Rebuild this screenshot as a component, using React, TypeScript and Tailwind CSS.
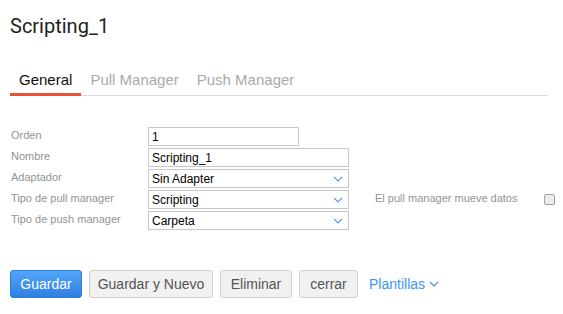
import React from "react";

const Chevron = ({ className = "" }: { className?: string }) => (
  <svg width="10" height="6" viewBox="0 0 10 6" className={className}>
    <path d="M1 1 L5 5 L9 1" fill="none" stroke="currentColor" strokeWidth="1.2" />
  </svg>
);

const Row = ({ label, children }: { label: string; children: React.ReactNode }) => (
  <div className="flex items-center h-[21px]">
    <div className="w-[148px] pl-[11px] mb-[3px] text-[11px] text-[#939393]">{label}</div>
    {children}
  </div>
);

const Select = ({ value }: { value: string }) => (
  <div className="w-[201px] h-[19px] border border-[#c8c8c8] bg-white flex items-center justify-between pl-[3px] pr-[5px] text-[12px] text-black">
    <span>{value}</span>
    <Chevron className="text-[#5b9bf0]" />
  </div>
);

export default function App() {
  return (
    <div className="w-[563px] h-[314px] bg-white relative" style={{ fontFamily: '"Liberation Sans", Arial, sans-serif' }}>
      <div className="pl-[10px] pt-[13px] text-[20px] text-[#222] leading-[26px]" style={{ fontFamily: 'Roboto, sans-serif' }}>
        Scripting_1
      </div>
      <div className="mt-[31px] ml-[10px] mr-[15px] flex border-b border-[#dcdcdc] text-[15px]">
        <div className="px-[9px] pb-[3px] leading-[20px] text-[#111] border-b-[3px] border-[#e8523a] mb-[-1px]">General</div>
        <div className="px-[9px] pb-[3px] leading-[20px] text-[#aaaaaa]">Pull Manager</div>
        <div className="px-[9px] pb-[3px] leading-[20px] text-[#aaaaaa]">Push Manager</div>
      </div>
      <div className="mt-[30px] flex flex-col">
        <Row label="Orden">
          <div className="w-[151px] h-[19px] border border-[#c8c8c8] pl-[3px] text-[12px] text-black flex items-center">1</div>
        </Row>
        <Row label="Nombre">
          <div className="w-[201px] h-[19px] border border-[#c8c8c8] pl-[3px] text-[12px] text-black flex items-center">Scripting_1</div>
        </Row>
        <Row label="Adaptador">
          <Select value="Sin Adapter" />
        </Row>
        <Row label="Tipo de pull manager">
          <Select value="Scripting" />
          <div className="ml-[26px] mb-[3px] text-[11px] text-[#939393] w-[169px]">El pull manager mueve datos</div>
          <div className="w-[11px] h-[11px] rounded-[2px] border border-[#a0a0a0] bg-[#ececec]" />
        </Row>
        <Row label="Tipo de push manager">
          <Select value="Carpeta" />
        </Row>
      </div>
      <div className="mt-[39px] pl-[10px] flex items-center gap-[7px] text-[14px]">
        <button className="h-[28px] w-[72px] rounded-[3px] text-white border border-[#2f7de0] bg-gradient-to-b from-[#52a5f7] to-[#2f80e2]">Guardar</button>
        <button className="h-[28px] w-[124px] rounded-[3px] text-[#555] border border-[#d0d0d0] bg-[#f1f1f1]">Guardar y Nuevo</button>
        <button className="h-[28px] w-[72px] rounded-[3px] text-[#555] border border-[#d0d0d0] bg-[#f1f1f1]">Eliminar</button>
        <button className="h-[28px] w-[59px] rounded-[3px] text-[#555] border border-[#d0d0d0] bg-[#f1f1f1]">cerrar</button>
        <div className="ml-[4px] flex items-center gap-[4px] text-[#3b97f0]">
          <span>Plantillas</span>
          <Chevron />
        </div>
      </div>
    </div>
  );
}
